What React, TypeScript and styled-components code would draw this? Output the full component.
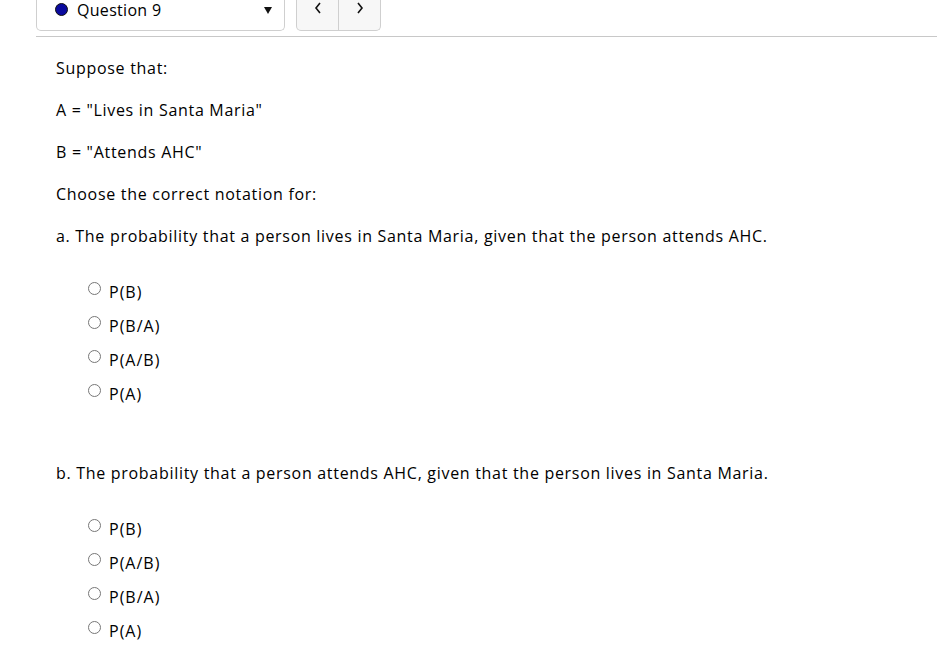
import React from "react";
import styled, { createGlobalStyle } from "styled-components";

const Global = createGlobalStyle`
  html, body { margin: 0; padding: 0; background: #fff; }
  body { font-family: "Open Sans", "DejaVu Sans", sans-serif; color: #000; }
`;

const Page = styled.div`
  width: 937px;
  height: 658px;
  overflow: hidden;
  background: #fff;
`;

const Header = styled.div`
  display: flex;
  align-items: flex-start;
  padding-left: 36px;
  height: 31px;
`;

const Dropdown = styled.div`
  box-sizing: border-box;
  width: 249px;
  height: 31px;
  border: 1px solid #cfcfcf;
  border-top: none;
  border-radius: 0 0 5px 5px;
  display: flex;
  align-items: flex-start;
  padding: 0 12px 0 18px;
  background: #fff;
`;

const Dot = styled.span`
  width: 13px;
  height: 13px;
  margin-top: 3px;
  border-radius: 50%;
  background: #0a0a9e;
  border: 1px solid #111;
  box-sizing: border-box;
  flex: none;
`;

const QTitle = styled.span`
  margin-left: 9px;
  padding-top: 1px;
  font-family: "Open Sans", sans-serif;
  font-size: 16px;
  line-height: 18px;
  letter-spacing: 0.3px;
  color: #000;
`;

const Caret = styled.span`
  margin-left: auto;
  margin-top: 7px;
  width: 0;
  height: 0;
  border-left: 4px solid transparent;
  border-right: 4px solid transparent;
  border-top: 7px solid #111;
`;

const Nav = styled.div`
  margin-left: 11px;
  box-sizing: border-box;
  width: 85px;
  height: 31px;
  border: 1px solid #cfcfcf;
  border-top: none;
  border-radius: 0 0 5px 5px;
  background: #f7f7f7;
  display: flex;
`;

const NavBtn = styled.button<{ $divider?: boolean }>`
  flex: 1;
  border: none;
  background: transparent;
  padding: 0;
  display: flex;
  justify-content: center;
  align-items: flex-start;
  padding-top: 2px;
  border-left: ${(p) => (p.$divider ? "1px solid #cfcfcf" : "none")};
  cursor: pointer;
`;

const Rule = styled.div`
  margin: 5px 0 0 36px;
  border-top: 1px solid #c8c8c8;
`;

const Content = styled.div`
  padding: 21px 0 0 56px;
`;

const Para = styled.p<{ $gap?: number }>`
  margin: 0 0 ${(p) => p.$gap ?? 22}px 0;
  font-size: 16px;
  line-height: 20px;
  color: #000;
  letter-spacing: 0.7px;
`;

const Options = styled.div<{ $after?: number }>`
  display: flex;
  flex-direction: column;
  gap: 14px;
  padding-left: 32px;
  margin-bottom: ${(p) => p.$after ?? 0}px;
`;

const Option = styled.label`
  display: flex;
  align-items: flex-start;
  gap: 8px;
  height: 20px;
  line-height: 20px;
  font-family: "Open Sans", sans-serif;
  font-size: 16px;
  letter-spacing: 1px;
  color: #000;
`;

const Radio = styled.span`
  width: 13px;
  height: 13px;
  margin-top: 0px;
  border-radius: 50%;
  border: 1px solid #777;
  box-sizing: border-box;
  background: #fff;
  flex: none;
`;

const Chevron = ({ dir }: { dir: "left" | "right" }) => (
  <svg width="8" height="12" viewBox="0 0 8 12">
    <path
      d={dir === "left" ? "M6 1 L2 6 L6 11" : "M2 1 L6 6 L2 11"}
      fill="none"
      stroke="#111"
      strokeWidth="1.6"
    />
  </svg>
);

const partA = ["P(B)", "P(B/A)", "P(A/B)", "P(A)"];
const partB = ["P(B)", "P(A/B)", "P(B/A)", "P(A)"];

export default function App() {
  return (
    <Page>
      <Global />
      <Header>
        <Dropdown>
          <Dot />
          <QTitle>Question 9</QTitle>
          <Caret />
        </Dropdown>
        <Nav>
          <NavBtn aria-label="previous">
            <Chevron dir="left" />
          </NavBtn>
          <NavBtn $divider aria-label="next">
            <Chevron dir="right" />
          </NavBtn>
        </Nav>
      </Header>
      <Rule />
      <Content>
        <Para>Suppose that:</Para>
        <Para>A = "Lives in Santa Maria"</Para>
        <Para>B = "Attends AHC"</Para>
        <Para>Choose the correct notation for:</Para>
        <Para $gap={36}>
          a. The probability that a person lives in Santa Maria, given that the person attends AHC.
        </Para>
        <Options $after={59}>
          {partA.map((o, i) => (
            <Option key={i}>
              <Radio />
              {o}
            </Option>
          ))}
        </Options>
        <Para $gap={36}>
          b. The probability that a person attends AHC, given that the person lives in Santa Maria.
        </Para>
        <Options>
          {partB.map((o, i) => (
            <Option key={i}>
              <Radio />
              {o}
            </Option>
          ))}
        </Options>
      </Content>
    </Page>
  );
}
